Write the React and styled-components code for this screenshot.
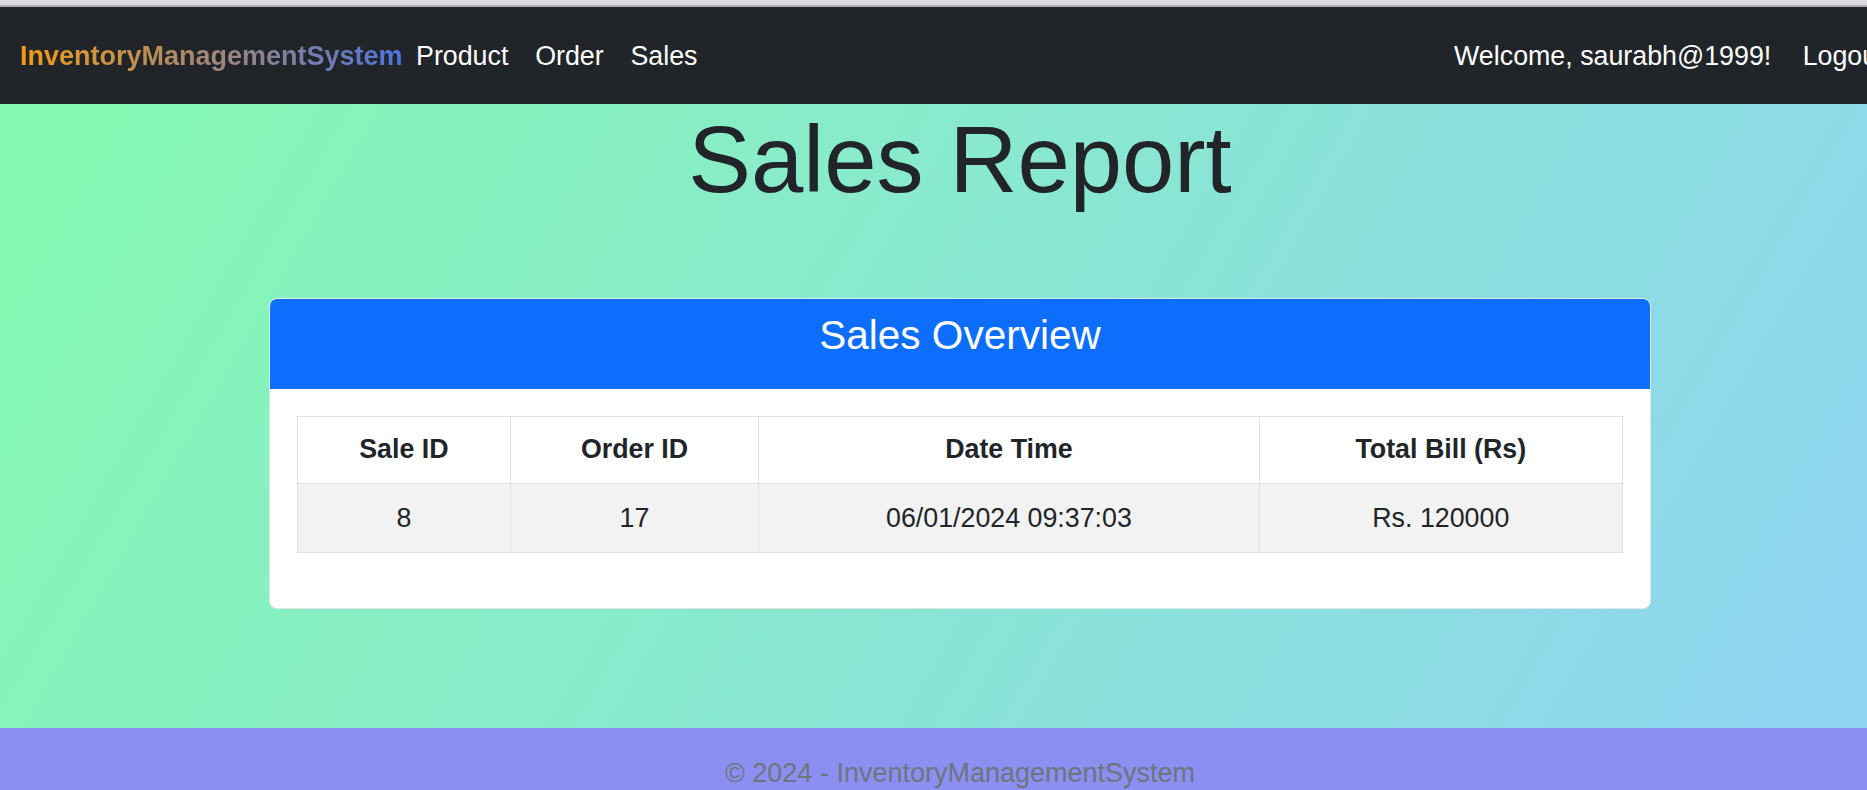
import styled, { createGlobalStyle } from "styled-components";

const GlobalStyle = createGlobalStyle`
  html, body {
    margin: 0;
    padding: 0;
    overflow: hidden;
  }
  body {
    font-family: "Liberation Sans", Arial, sans-serif;
    color: #212529;
  }
`

const Page = styled.div`
  width: 1920px;
`

const TopStrip = styled.div`
  height: 5px;
  background: #dcdce0;
  border-bottom: 2px solid #aeaeb2;
`

const Navbar = styled.nav`
  height: 97px;
  background: #212529;
  display: flex;
  align-items: center;
  padding: 0 22px 0 20px;
  font-size: 26.8px;
  line-height: 40px;
`

const Brand = styled.a`
  font-size: 27px;
  font-weight: 700;
  margin-right: 0;
  background: linear-gradient(to right, #f39c12, #4e73df);
  -webkit-background-clip: text;
  background-clip: text;
  color: transparent;
  text-decoration: none;
`

const NavLinks = styled.div`
  display: flex;
  align-items: center;
  margin-right: auto;
`

const NavLink = styled.a`
  color: #fff;
  text-decoration: none;
  padding: 0 13.4px;
`

const NavRight = styled.div`
  display: flex;
  align-items: center;
`

const Welcome = styled.span`
  color: #fff;
  padding-right: 18px;
`

const Main = styled.main`
  height: 624px;
  background: linear-gradient(120deg, #84fab0 0%, #8fd3f4 100%);
  overflow: hidden;
`

const Title = styled.h1`
  margin: 0;
  font-size: 94px;
  font-weight: 400;
  line-height: 1.2;
  text-align: center;
  color: #212529;
`

const Card = styled.div`
  width: 1382px;
  margin: 81px auto 0;
  background: #fff;
  border: 1px solid #dfe6e4;
  border-radius: 8px;
  overflow: hidden;
  box-sizing: border-box;
`

const CardHeader = styled.div`
  background: #0d6efd;
  color: #fff;
  padding: 12px 16px 17px;
  text-align: center;

  h4 {
    margin: 0 0 13px;
    font-size: 40.5px;
    font-weight: 400;
    line-height: 48px;
  }
`

const CardBody = styled.div`
  padding: 27px 27px 55px;
`

const Table = styled.table`
  width: 100%;
  border-collapse: collapse;
  font-size: 26.8px;
  line-height: 40px;
  text-align: center;

  th, td {
    border: 1px solid #dee2e6;
    padding: 12px 13px 14px;
  }
  th {
    font-weight: 700;
    background: #fff;
  }
  td {
    padding: 14px 13px;
    background: #f2f2f2;
  }
`

const Footer = styled.footer`
  background: #8b8ff2;
  color: #6c757d;
  text-align: center;
  font-size: 27px;
  line-height: 40px;
  padding: 25px 0;
`

const columns = [
  { label: "Sale ID", width: 213 },
  { label: "Order ID", width: 249 },
  { label: "Date Time", width: 501 },
  { label: "Total Bill (Rs)", width: 364 },
]

const sales = [
  { id: 8, orderId: 17, dateTime: "06/01/2024 09:37:03", total: 120000 },
]

export default function App() {
  return (
    <Page>
      <GlobalStyle />
      <TopStrip />
      <Navbar>
        <Brand href="#">InventoryManagementSystem</Brand>
        <NavLinks>
          <NavLink href="#">Product</NavLink>
          <NavLink href="#">Order</NavLink>
          <NavLink href="#">Sales</NavLink>
        </NavLinks>
        <NavRight>
          <Welcome>Welcome, saurabh@1999!</Welcome>
          <NavLink href="#">Logout</NavLink>
        </NavRight>
      </Navbar>
      <Main>
        <Title>Sales Report</Title>
        <Card>
          <CardHeader>
            <h4>Sales Overview</h4>
          </CardHeader>
          <CardBody>
            <Table>
              <colgroup>
                {columns.map((c) => (
                  <col key={c.label} style={{ width: c.width }} />
                ))}
              </colgroup>
              <thead>
                <tr>
                  {columns.map((c) => (
                    <th key={c.label}>{c.label}</th>
                  ))}
                </tr>
              </thead>
              <tbody>
                {sales.map((s) => (
                  <tr key={s.id}>
                    <td>{s.id}</td>
                    <td>{s.orderId}</td>
                    <td>{s.dateTime}</td>
                    <td>Rs. {s.total}</td>
                  </tr>
                ))}
              </tbody>
            </Table>
          </CardBody>
        </Card>
      </Main>
      <Footer>© 2024 - InventoryManagementSystem</Footer>
    </Page>
  )
}
